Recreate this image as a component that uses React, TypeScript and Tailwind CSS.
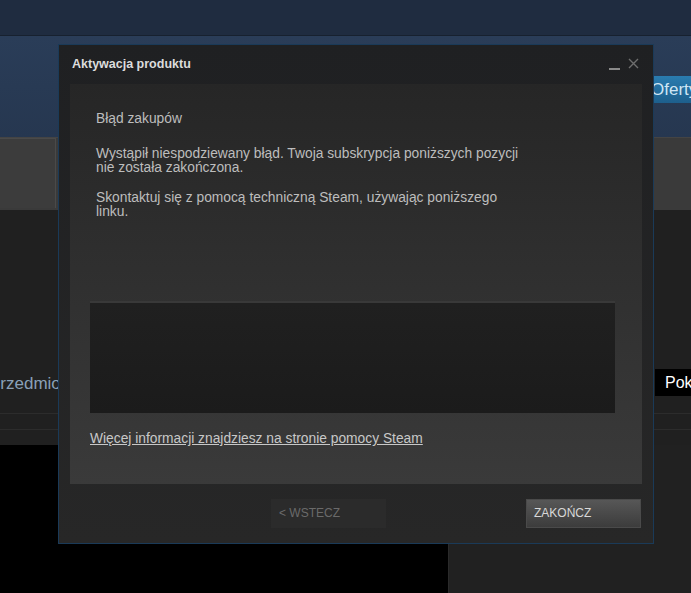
export default function App() {
  const font = { fontFamily: '"Liberation Sans", Arial, sans-serif' };
  return (
    <div className="relative w-[691px] h-[593px] overflow-hidden bg-[#202020]" style={font}>
      {/* store header behind the dialog */}
      <div className="h-[36px] bg-[#1f2c40] border-b border-[#17212f]" />
      <div className="h-[101px] bg-gradient-to-b from-[#2a3d58] to-[#263750] flex items-start justify-end pt-[40px]">
        <div className="w-[60px] -mr-[20px] h-[27px] bg-gradient-to-b from-[#2a7cb0] to-[#1d5f8c] text-[#cfe6f5] text-[17px] leading-[27px]">
          Oferty
        </div>
      </div>
      <div className="h-[73px] bg-[#3a3a3a] border-t border-[#444] flex">
        <div className="w-[56px] h-[70px] bg-[#3c3c3c] border-t border-r border-[#4a4a4a]" />
      </div>
      <div className="h-[203px] bg-[#202020] flex items-end justify-between pb-[17px]">
        <span className="-ml-[11px] text-[17px] text-[#8aa0b8]">Przedmioty</span>
        <div className="w-[36px] h-[27px] bg-black text-white text-[16px] leading-[27px] pl-[10px]">Pokaż</div>
      </div>
      <div className="h-[16px] border-t border-[#2c2c2c]" />
      <div className="h-[16px] border-t border-[#2c2c2c]" />
      <div className="flex h-[150px]">
        <div className="w-[448px] bg-black" />
        <div className="flex-1 bg-[#212121] border-l border-[#2a2a2a]" />
      </div>

      {/* dialog */}
      <div className="absolute left-[58px] top-[44px] w-[596px] h-[500px] border border-[#1a3a58] bg-gradient-to-b from-[#1f2022] to-[#272727] flex flex-col">
        <div className="h-[39px] flex items-center justify-between pl-[13px] pr-[14px]">
          <span className="text-[12.5px] font-bold text-[#dcdcdc]">Aktywacja produktu</span>
          <div className="flex items-center gap-[8px]">
            <div className="w-[11px] h-[2px] bg-[#8a8a8a] mt-[8px]" />
            <svg width="11" height="11" viewBox="0 0 11 11" className="mb-[2px]">
              <path d="M1 1L10 10M10 1L1 10" stroke="#6e6e6e" strokeWidth="1.4" />
            </svg>
          </div>
        </div>
        <div className="mx-[11px] h-[400px] bg-gradient-to-b from-[#262626] to-[#3a3a3a] flex flex-col">
          <div className="pl-[26px] pt-[28px] text-[13.8px] leading-[14px] text-[#bdbdbd] w-[452px]">
            <p>Błąd zakupów</p>
            <p className="mt-[21px]">
              Wystąpił niespodziewany błąd. Twoja subskrypcja poniższych pozycji nie została zakończona.
            </p>
            <p className="mt-[16px]">Skontaktuj się z pomocą techniczną Steam, używając poniższego linku.</p>
          </div>
          <div className="ml-[20px] mt-[82px] w-[525px] h-[112px] bg-gradient-to-b from-[#202020] to-[#1b1b1b] border-t-2 border-[#393939]" />
          <a className="ml-[20px] mt-[19px] text-[13.8px] leading-[14px] text-[#c8c8c8] underline">
            Więcej informacji znajdziesz na stronie pomocy Steam
          </a>
        </div>
        <div className="flex justify-end gap-[140px] pr-[12px] pt-[15px]">
          <div className="w-[115px] h-[29px] bg-[#2b2b2b] text-[#6a6a6a] text-[12px] leading-[29px] pl-[8px]">
            &lt; WSTECZ
          </div>
          <div className="w-[115px] h-[29px] bg-gradient-to-b from-[#575757] to-[#3c3c3c] border border-[#4a4a4a] text-[#d8d8d8] text-[12px] leading-[27px] pl-[7px]">
            ZAKOŃCZ
          </div>
        </div>
      </div>
    </div>
  );
}
